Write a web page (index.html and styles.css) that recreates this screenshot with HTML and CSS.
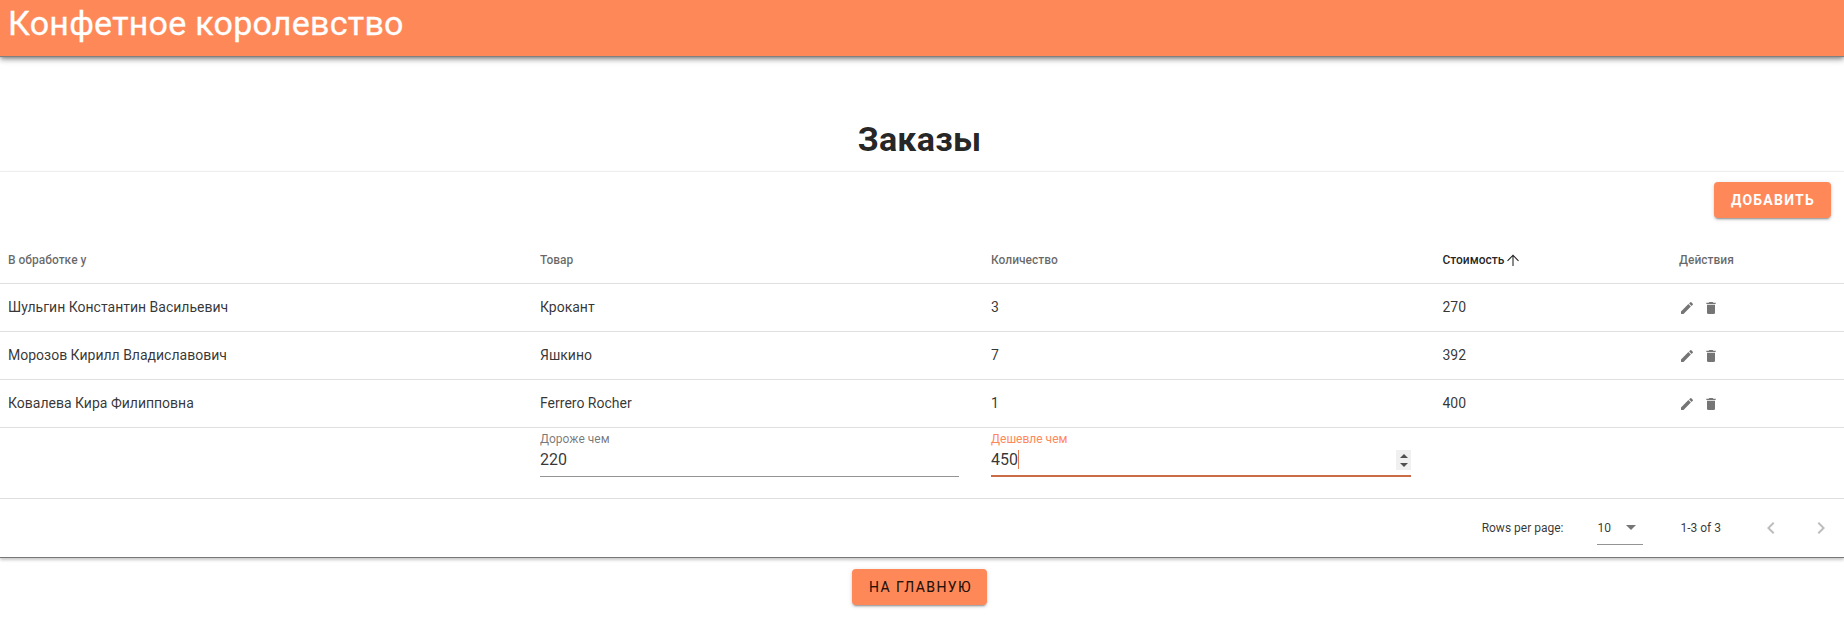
FILE: index.html
```html
<!DOCTYPE html>
<html lang="ru">
<head>
<meta charset="utf-8">
<title>Конфетное королевство</title>
<link rel="stylesheet" href="styles.css">
</head>
<body>
<svg class="sprite" width="0" height="0">
  <symbol id="pencil" viewBox="0 0 24 24"><path d="M20.71,7.04C21.1,6.65 21.1,6 20.71,5.63L18.37,3.29C18,2.9 17.35,2.9 16.96,3.29L15.12,5.12L18.87,8.87M3,17.25V21H6.75L17.81,9.93L14.06,6.18L3,17.25Z"/></symbol>
  <symbol id="trash" viewBox="0 0 24 24"><path d="M19,4H15.5L14.5,3H9.5L8.5,4H5V6H19M6,19A2,2 0 0,0 8,21H16A2,2 0 0,0 18,19V7H6V19Z"/></symbol>
</svg>
<header class="app-bar"><div class="app-title">Конфетное королевство</div></header>
<main>
  <h1 class="page-title">Заказы</h1>
  <section class="card">
    <div class="toolbar"><button class="btn btn-add">Добавить</button></div>
    <div class="row head">
      <div>В обработке у</div><div>Товар</div><div>Количество</div>
      <div class="sorted"><span>Стоимость</span><svg width="18" height="18" viewBox="0 0 24 24"><path d="M12.7,20H11.3V7.4L5.2,13.5L4.2,12.5L12,4.5L19.8,12.5L18.8,13.5L12.7,7.4V20Z"/></svg></div>
      <div>Действия</div>
    </div>
    <div class="row data">
      <div>Шульгин Константин Васильевич</div><div>Крокант</div><div>3</div><div>270</div>
      <div class="actions"><svg><use href="#pencil"/></svg><svg><use href="#trash"/></svg></div>
    </div>
    <div class="row data">
      <div>Морозов Кирилл Владиславович</div><div>Яшкино</div><div>7</div><div>392</div>
      <div class="actions"><svg><use href="#pencil"/></svg><svg><use href="#trash"/></svg></div>
    </div>
    <div class="row data">
      <div>Ковалева Кира Филипповна</div><div>Ferrero Rocher</div><div>1</div><div>400</div>
      <div class="actions"><svg><use href="#pencil"/></svg><svg><use href="#trash"/></svg></div>
    </div>
    <div class="row filters">
      <div></div>
      <div class="field"><div class="label">Дороже чем</div><div class="value">220</div></div>
      <div class="field focused"><div class="label">Дешевле чем</div><div class="value"><span class="typed">450</span><i class="caret"></i><span class="spin"><i class="up"></i><i class="down"></i></span></div></div>
    </div>
    <div class="footer">
      <span class="per-page">Rows per page:</span>
      <div class="select"><span>10</span><i></i></div>
      <span class="range">1-3 of 3</span>
      <svg class="chev" viewBox="0 0 24 24"><path d="M15.41,16.58L10.83,12L15.41,7.41L14,6L8,12L14,18L15.41,16.58Z"/></svg>
      <svg class="chev next" viewBox="0 0 24 24"><path d="M8.59,16.58L13.17,12L8.59,7.41L10,6L16,12L10,18L8.59,16.58Z"/></svg>
    </div>
  </section>
  <div class="bottom"><button class="btn btn-home">На главную</button></div>
</main>
</body>
</html>
```
FILE: styles.css
```css
* { box-sizing: border-box; }
body { margin: 0; height: 633px; overflow: hidden; background: #fff; color: rgba(0,0,0,.87); font-family: Roboto, sans-serif; font-size: 14px; }
.sprite { display: block; width: 0; height: 0; }
.app-bar { position: relative; height: 56px; padding: 3px 8px; background: #ff8859; box-shadow: 0 1px 0 #808080, 0 2px 4px -1px rgba(0,0,0,.4), 0 4px 5px rgba(0,0,0,.25), 0 1px 10px rgba(0,0,0,.12); }
.app-title { color: #fff; font-size: 34px; line-height: 40px; letter-spacing: .25px; -webkit-text-stroke: .3px #fff; }
main { display: flex; flex-direction: column; }
.page-title { margin: 63px 0 0; height: 52px; text-align: center; font-size: 34px; line-height: 40px; font-weight: 700; letter-spacing: .25px; padding-right: 5px; }
.card { height: 387px; border-top: 1px solid #eee; border-bottom: 1px solid #777; box-shadow: 0 2px 3px rgba(0,0,0,.22); }
.toolbar { height: 64px; padding: 10px 13px 0 0; display: flex; justify-content: flex-end; align-items: flex-start; }
.btn { height: 36px; padding: 0 16px; border: 0; border-radius: 4px; background: #ff8859; color: rgba(0,0,0,.87); font: 500 14px/36px Roboto, sans-serif; letter-spacing: 1.25px; text-transform: uppercase; box-shadow: 0 3px 1px -2px rgba(0,0,0,.2), 0 2px 2px rgba(0,0,0,.14), 0 1px 5px rgba(0,0,0,.12); }
.btn-add { width: 117px; padding: 0 0 0 1px; font-weight: 700; color: #fff; }
.btn-home { width: 135px; padding: 0 0 0 2px; font-weight: 400; letter-spacing: 1.4px; -webkit-text-stroke: .15px rgba(0,0,0,.87); }
.row { height: 48px; display: grid; grid-template-columns: 532px 451px 451.4px 236.6px 1fr; padding-left: 8px; align-items: center; border-bottom: 1px solid #dfdfdf; }
.data { padding-bottom: 2px; color: rgba(0,0,0,.8); }
.head { font-size: 12px; font-weight: 500; color: rgba(0,0,0,.6); }
.sorted { display: flex; align-items: center; color: rgba(0,0,0,.87); }
.sorted svg { fill: currentColor; }
.actions { display: flex; gap: 8px; padding-top: 3px; }
.actions svg { width: 16px; height: 16px; fill: #757575; }
.filters { height: 71px; align-items: start; }
.field { width: 419px; padding-top: 4px; height: 49px; border-bottom: 1px solid #949494; }
.label { font-size: 12px; line-height: 14px; color: rgba(0,0,0,.54); }
.value { height: 26px; display: flex; align-items: center; font-size: 16px; color: rgba(0,0,0,.8); }
.focused { width: 420px; border-bottom: 2px solid #ca6c48; }
.focused .label { color: #ff8859; }
.caret { width: 1px; height: 19px; background: #e87c50; }
.spin { margin: 2px 0 0 auto; width: 15px; height: 20px; background: #f0f0f0; display: flex; flex-direction: column; gap: 5px; align-items: center; justify-content: center; }
.up, .down { border: solid transparent; border-width: 0 4px; }
.up { border-bottom: 4px solid #505050; }
.down { border-top: 4px solid #505050; }
.footer { height: 58px; padding-right: 11px; display: flex; justify-content: flex-end; align-items: center; font-size: 12px; color: rgba(0,0,0,.8); }
.select { width: 46px; height: 32px; margin: 1px 37px 0 34px; padding: 0 7px 1px 0; border-bottom: 1px solid #949494; display: flex; align-items: center; justify-content: space-between; }
.select i { border: 5px solid transparent; border-top-color: #757575; border-bottom: 0; }
.chev { width: 24px; height: 24px; margin-left: 38px; fill: #bdbdbd; }
.next { margin-left: 26px; }
.bottom { display: flex; justify-content: center; padding: 11px 5px 0 0; }
```
